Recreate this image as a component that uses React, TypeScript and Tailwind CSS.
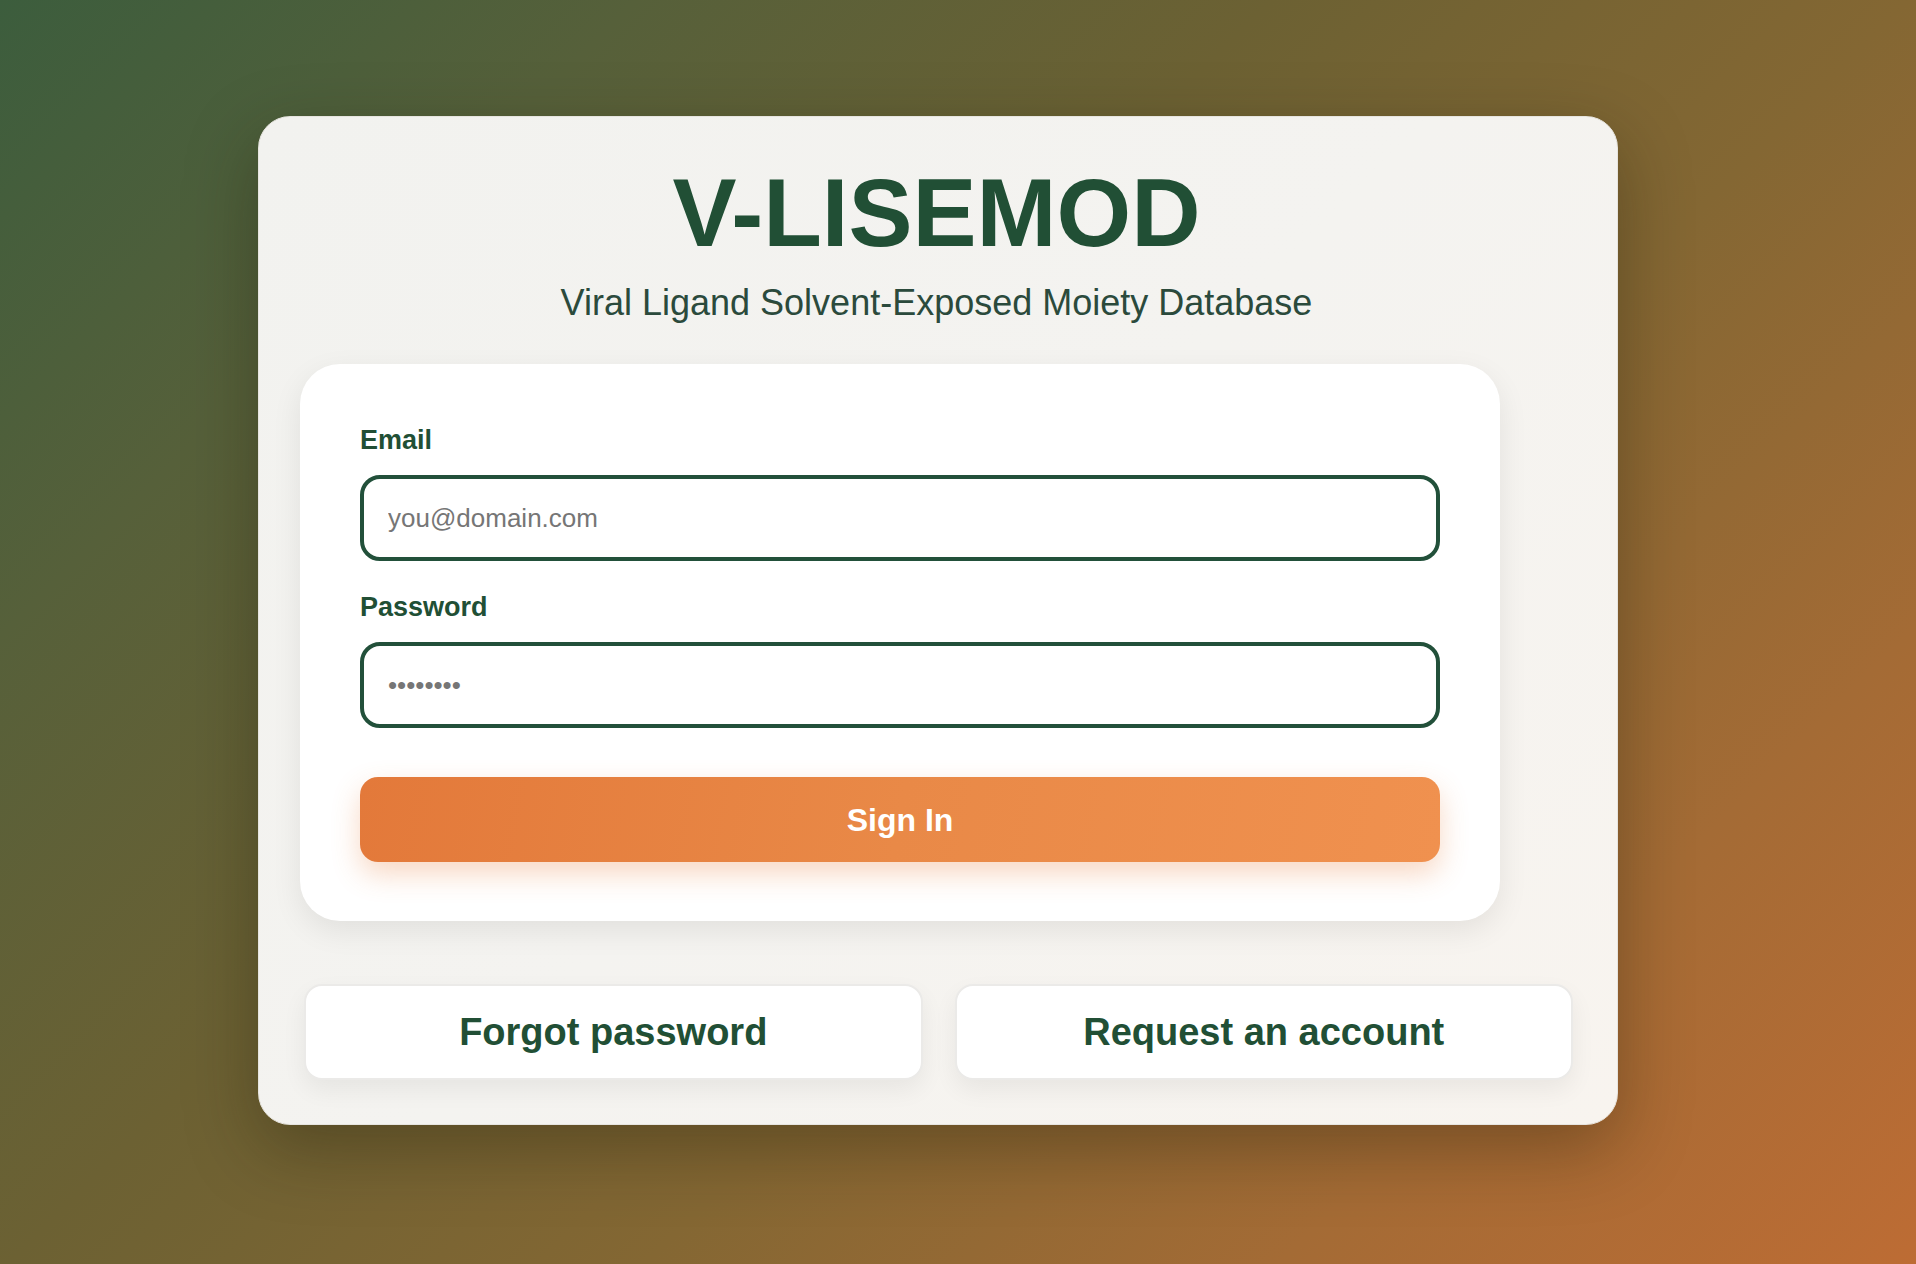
import { useState } from 'react';

export default function App() {
  const [email, setEmail] = useState('');
  const [password, setPassword] = useState('');

  return (
    <div
      className="min-h-screen w-full bg-[linear-gradient(135deg,#3c5d3d_0%,#56603a_20%,#6c6133_40%,#846733_60%,#a46b35_80%,#bd6c34_100%)] pt-[116px] pb-[139px] pl-[258px] font-['Liberation_Sans',Arial,sans-serif]"
    >
      {/* carte principale */}
      <div className="w-[1360px] rounded-[32px] border border-[#e6e4df] bg-[linear-gradient(135deg,#f2f2ef_0%,#f4f3f0_50%,#f8f4ef_100%)] pt-[48px] pb-[44px] pl-[41px] pr-[44px] shadow-[0_24px_70px_rgba(30,25,10,0.35)]">
        <h1 className="text-center text-[96px] font-bold leading-[96px] text-[#214f35]">
          V-LISEMOD
        </h1>
        <p className="mt-[22px] text-center text-[36px] leading-[40px] text-[#2b4a3c]">
          Viral Ligand Solvent-Exposed Moiety Database
        </p>

        {/* formulaire */}
        <div className="mt-[41px] w-[1200px] rounded-[40px] bg-white px-[60px] pt-[58px] pb-[59px] shadow-[0_10px_30px_rgba(0,0,0,0.08)]">
          <label className="block text-[27px] font-bold leading-[36px] text-[#214f35]">Email</label>
          <input
            type="email"
            value={email}
            onChange={(e) => setEmail(e.target.value)}
            placeholder="you@domain.com"
            className="mt-[17px] block h-[86px] w-full rounded-[20px] border-[4px] border-[#22503a] bg-white px-[24px] text-[26px] text-[#1f2d27] outline-none placeholder:text-[#767676]"
          />

          <label className="mt-[28px] block text-[27px] font-bold leading-[36px] text-[#214f35]">Password</label>
          <input
            type="password"
            value={password}
            onChange={(e) => setPassword(e.target.value)}
            placeholder="••••••••"
            className="mt-[17px] block h-[86px] w-full rounded-[20px] border-[4px] border-[#22503a] bg-white px-[24px] text-[26px] text-[#1f2d27] outline-none placeholder:text-[#767676]"
          />

          <button className="mt-[49px] block h-[85px] w-full rounded-[18px] bg-[linear-gradient(100deg,#e3793a_0%,#e98947_50%,#f0914f_100%)] text-[32px] font-bold text-white shadow-[0_12px_28px_rgba(232,125,60,0.3)]">
            Sign In
          </button>
        </div>

        {/* liens du bas */}
        <div className="mt-[63px] ml-[4px] grid grid-cols-2 gap-[32px]">
          <button className="h-[96px] rounded-[18px] border-[2px] border-[#ebeae8] bg-white text-[38px] font-bold text-[#214f35] shadow-[0_10px_24px_rgba(0,0,0,0.06)]">
            Forgot password
          </button>
          <button className="h-[96px] rounded-[18px] border-[2px] border-[#ebeae8] bg-white text-[38px] font-bold text-[#214f35] shadow-[0_10px_24px_rgba(0,0,0,0.06)]">
            Request an account
          </button>
        </div>
      </div>
    </div>
  );
}
